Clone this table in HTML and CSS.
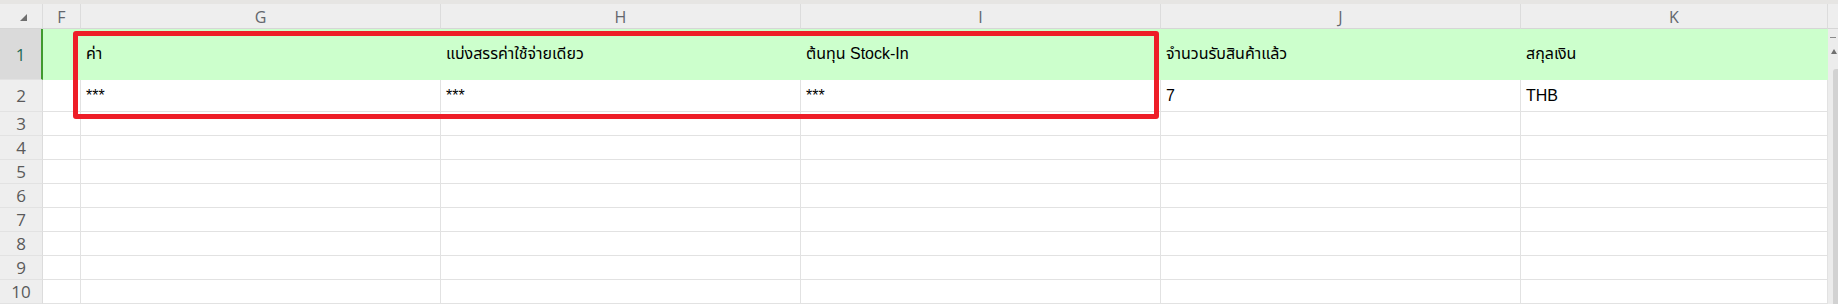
FILE: index.html
```html
<!DOCTYPE html>
<html lang="th">
<head>
<meta charset="utf-8">
<title>Sheet</title>
<link rel="stylesheet" href="styles.css">
</head>
<body>
<div class="topstrip"></div>
<div class="wrap">
  <div class="sheet">
    <div class="corner"><span class="tri"></span></div>
    <div class="colh">F</div>
    <div class="colh">G</div>
    <div class="colh">H</div>
    <div class="colh">I</div>
    <div class="colh">J</div>
    <div class="colh">K</div>

    <div class="rowh sel">1</div>
    <div class="c g first"></div>
    <div class="c g">ค่า</div>
    <div class="c g">แบ่งสรรค่าใช้จ่ายเดียว</div>
    <div class="c g">ต้นทุน Stock-In</div>
    <div class="c g">จำนวนรับสินค้าแล้ว</div>
    <div class="c g">สกุลเงิน</div>

    <div class="rowh r2">2</div>
    <div class="c r2"></div>
    <div class="c r2">***</div>
    <div class="c r2">***</div>
    <div class="c r2">***</div>
    <div class="c r2">7</div>
    <div class="c r2">THB</div>

    <div class="rowh">3</div><div class="c"></div><div class="c"></div><div class="c"></div><div class="c"></div><div class="c"></div><div class="c"></div>
    <div class="rowh">4</div><div class="c"></div><div class="c"></div><div class="c"></div><div class="c"></div><div class="c"></div><div class="c"></div>
    <div class="rowh">5</div><div class="c"></div><div class="c"></div><div class="c"></div><div class="c"></div><div class="c"></div><div class="c"></div>
    <div class="rowh">6</div><div class="c"></div><div class="c"></div><div class="c"></div><div class="c"></div><div class="c"></div><div class="c"></div>
    <div class="rowh">7</div><div class="c"></div><div class="c"></div><div class="c"></div><div class="c"></div><div class="c"></div><div class="c"></div>
    <div class="rowh">8</div><div class="c"></div><div class="c"></div><div class="c"></div><div class="c"></div><div class="c"></div><div class="c"></div>
    <div class="rowh">9</div><div class="c"></div><div class="c"></div><div class="c"></div><div class="c"></div><div class="c"></div><div class="c"></div>
    <div class="rowh">10</div><div class="c"></div><div class="c"></div><div class="c"></div><div class="c"></div><div class="c"></div><div class="c"></div>

    <div class="redbox"></div>
  </div>
  <div class="vscroll">
    <div class="vtop"></div>
    <div class="vbody">
      <span class="dash"></span>
      <span class="up"></span>
      <span class="thumb"></span>
    </div>
  </div>
</div>
</body>
</html>
```
FILE: styles.css
```css
* { box-sizing: border-box; }
html, body {
  margin: 0;
  padding: 0;
  background: #ffffff;
  width: 1838px;
  height: 305px;
  overflow: hidden;
  font-family: "Liberation Sans", "Noto Sans Thai", "Noto Sans", sans-serif;
}
.topstrip {
  height: 4px;
  background: #e6e5e3;
}
.wrap {
  display: flex;
}
.sheet {
  position: relative;
  display: grid;
  grid-template-columns: 43px 38px 360px 360px 360px 360px 307px;
  grid-template-rows: 25px 51px 32px repeat(8, 24px);
  width: 1828px;
}
.corner {
  background: #eeeeee;
  border-right: 1px solid #dcdcdc;
  border-bottom: 1px solid #d6d6d6;
  display: flex;
  align-items: center;
  justify-content: center;
}
.tri {
  width: 0;
  height: 0;
  border-left: 7px solid transparent;
  border-bottom: 7px solid #6e6e6e;
  margin-left: 4px;
  margin-top: 2px;
}
.colh {
  background: #eeeeee;
  border-right: 1px solid #dcdcdc;
  border-bottom: 1px solid #d6d6d6;
  color: #62666c;
  font-family: "Open Sans", "Noto Sans", sans-serif;
  font-size: 16px;
  display: flex;
  align-items: center;
  justify-content: center;
  padding-top: 1px;
}
.rowh {
  background: #eeeeee;
  border-right: 1px solid #dcdcdc;
  border-bottom: 1px solid #e2e2e2;
  color: #5a5a5a;
  font-family: "Open Sans", "Noto Sans", sans-serif;
  font-size: 17px;
  display: flex;
  align-items: center;
  justify-content: center;
}
.rowh.sel {
  background: #dadada;
  color: #1f6b55;
  border-right: 2px solid #3f9a2e;
}
.c {
  border-right: 1px solid #e2e2e2;
  border-bottom: 1px solid #e2e2e2;
  font-size: 16px;
  color: #000;
  display: flex;
  align-items: center;
  padding-left: 5px;
  white-space: nowrap;
  overflow: hidden;
}
.c.g {
  background: #ccffcc;
  border-right-color: #ccffcc;
  border-bottom-color: #ccffcc;
}
.redbox {
  position: absolute;
  left: 73px;
  top: 27px;
  width: 1086px;
  height: 88px;
  border: 5px solid #ee1d27;
  border-radius: 3px;
  pointer-events: none;
}
.vscroll {
  width: 10px;
  display: flex;
  flex-direction: column;
}
.vtop {
  height: 25px;
  background: #eeeeee;
  border-bottom: 1px solid #d6d6d6;
}
.vbody {
  flex: 1;
  background: #ececec;
  position: relative;
}
.dash {
  position: absolute;
  left: 2px;
  top: 8px;
  width: 6px;
  height: 1px;
  background: #8a8a8a;
}
.up {
  position: absolute;
  left: 3px;
  top: 20px;
  width: 0;
  height: 0;
  border-left: 3px solid transparent;
  border-right: 3px solid transparent;
  border-bottom: 5px solid #707070;
}
.thumb {
  position: absolute;
  left: 5px;
  top: 40px;
  width: 5px;
  bottom: 0;
  background: #d2d2d2;
  border-radius: 3px 0 0 0;
}
```
